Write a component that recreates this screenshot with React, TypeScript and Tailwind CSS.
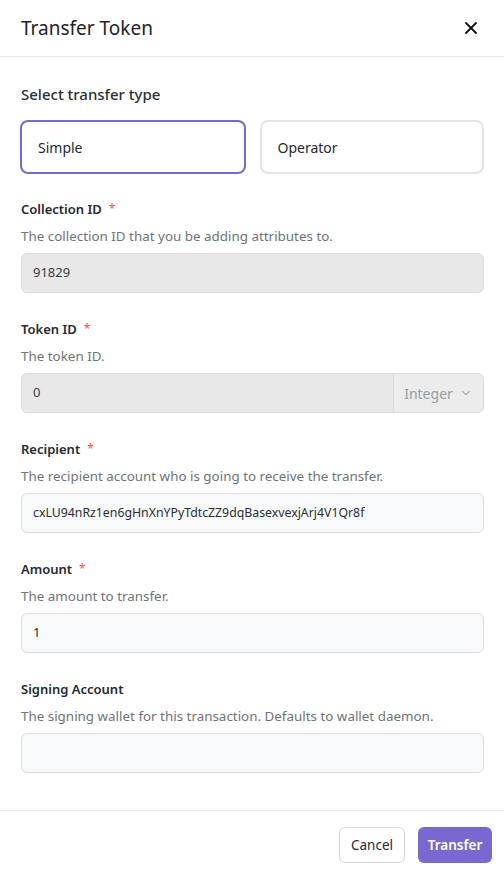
import { X, ChevronDown } from 'lucide-react';

const font = { fontFamily: '"Noto Sans", "Open Sans", sans-serif' };

interface FieldProps {
  label: string;
  required?: boolean;
  description: string;
  children: React.ReactNode;
}

function Field({ label, required, description, children }: FieldProps) {
  return (
    <div className="mb-[26px]">
      <div className="flex items-center text-[13px] font-semibold text-[#262a33] leading-[20px]">
        {label}
        {required && <span className="ml-[7px] text-[#ef5350] text-[12px] font-normal">*</span>}
      </div>
      <p className="mt-[7px] mb-[7px] text-[13.4px] text-[#70737a] leading-[20px]">{description}</p>
      {children}
    </div>
  );
}

export default function App() {
  return (
    <div className="w-[504px] h-[875px] bg-white flex flex-col text-[#262a33]" style={font}>
      <div className="h-[57px] shrink-0 border-b border-[#e6e7ea] flex items-center justify-between pl-[21px] pr-[23px]">
        <h1 className="text-[19px] leading-[24px] text-[#1f2229]">Transfer Token</h1>
        <X className="h-[20px] w-[20px] text-[#111]" strokeWidth={2.2} />
      </div>

      <div className="flex-1 pl-[21px] pr-[20px] pt-[27px]">
        <h2 className="text-[15px] font-medium text-[#2b2e36] leading-[20px]">Select transfer type</h2>
        <div className="mt-[16px] grid grid-cols-2 gap-[14px] mb-[25px]">
          <button className="h-[54px] -ml-[1px] rounded-[8px] border-2 border-[#7a68cc] text-left pl-[16px] text-[14px] text-[#262a33]">
            Simple
          </button>
          <button className="h-[54px] rounded-[8px] border-2 border-[#e3e4e8] text-left pl-[16px] text-[14px] text-[#262a33]">
            Operator
          </button>
        </div>

        <Field label="Collection ID" required description="The collection ID that you be adding attributes to.">
          <div className="h-[40px] rounded-[6px] border border-[#dcdde0] bg-[#e8e8e8] flex items-center px-[11px] text-[13px] text-[#3b3e45]">
            91829
          </div>
        </Field>

        <Field label="Token ID" required description="The token ID.">
          <div className="h-[40px] rounded-[6px] border border-[#dcdde0] bg-[#e8e8e8] flex items-stretch text-[13px]">
            <div className="flex-1 flex items-center px-[11px] text-[#3b3e45]">0</div>
            <div className="w-[90px] border-l border-[#d9dade] bg-[#ececec] rounded-r-[6px] flex items-center justify-center gap-[6px] text-[14px] text-[#9a9ca1]">
              Integer
              <ChevronDown className="h-[14px] w-[14px]" strokeWidth={1.8} />
            </div>
          </div>
        </Field>

        <Field label="Recipient" required description="The recipient account who is going to receive the transfer.">
          <div className="h-[40px] rounded-[6px] border border-[#dcdde0] bg-[#f8f9fa] flex items-center px-[11px] text-[12.3px] text-[#2b2e36]">
            cxLU94nRz1en6gHnXnYPyTdtcZZ9dqBasexvexjArj4V1Qr8f
          </div>
        </Field>

        <Field label="Amount" required description="The amount to transfer.">
          <div className="h-[40px] rounded-[6px] border border-[#dcdde0] bg-[#f8f9fa] flex items-center px-[11px] text-[13px] text-[#2b2e36]">
            1
          </div>
        </Field>

        <Field label="Signing Account" description="The signing wallet for this transaction. Defaults to wallet daemon.">
          <div className="h-[40px] rounded-[6px] border border-[#dcdde0] bg-[#f8f9fa]" />
        </Field>
      </div>

      <div className="h-[65px] shrink-0 border-t border-[#e6e7ea] flex items-center justify-end gap-[13px] pr-[12px] pt-[4px]">
        <button className="h-[36px] w-[66px] rounded-[6px] border border-[#d7d8dc] bg-white text-[13.5px] text-[#262a33]">
          Cancel
        </button>
        <button className="h-[36px] w-[74px] rounded-[6px] bg-[#7a67cf] text-white text-[13.5px] font-semibold">
          Transfer
        </button>
      </div>
    </div>
  );
}
